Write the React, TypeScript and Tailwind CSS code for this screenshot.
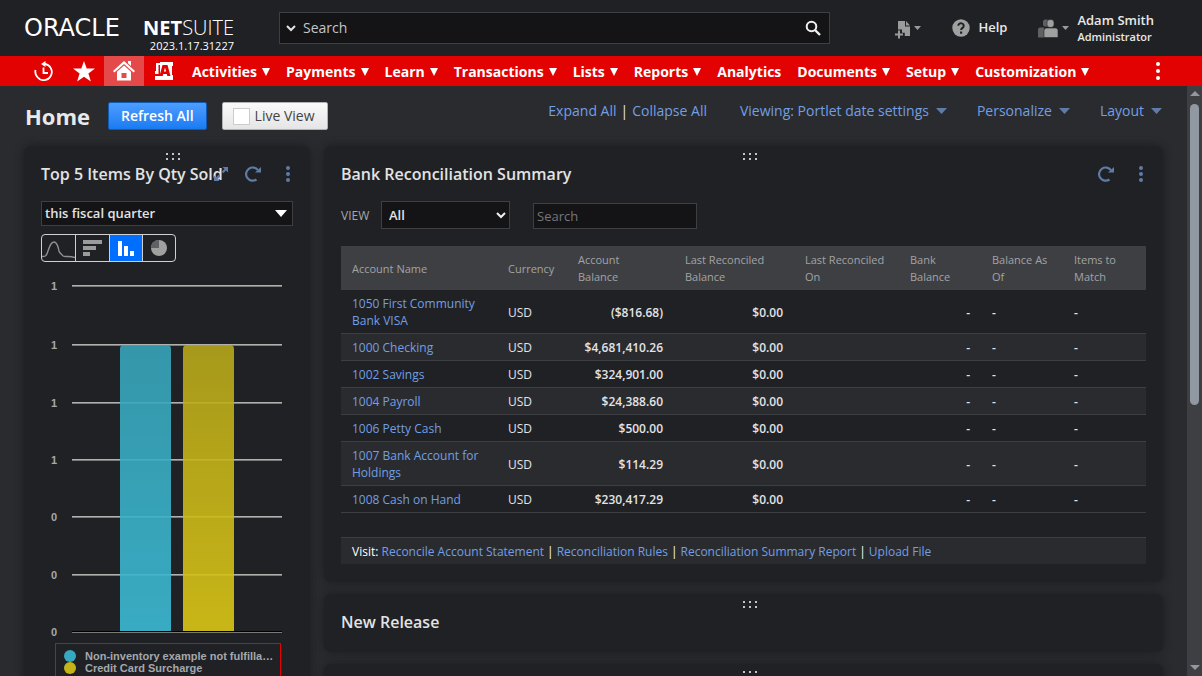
import { ReactNode, useState } from "react";

type Account = {
  name: string;
  balance: string;
};

const NAV_ITEMS = [
  { label: "Activities", menu: true },
  { label: "Payments", menu: true },
  { label: "Learn", menu: true },
  { label: "Transactions", menu: true },
  { label: "Lists", menu: true },
  { label: "Reports", menu: true },
  { label: "Analytics", menu: false },
  { label: "Documents", menu: true },
  { label: "Setup", menu: true },
  { label: "Customization", menu: true },
];

const COLUMNS = [
  { label: "Account Name", width: "w-[156px]" },
  { label: "Currency", width: "w-[70px]" },
  { label: "Account\nBalance", width: "w-[107px]" },
  { label: "Last Reconciled\nBalance", width: "w-[120px]" },
  { label: "Last Reconciled\nOn", width: "w-[105px]" },
  { label: "Bank\nBalance", width: "w-[82px]" },
  { label: "Balance As\nOf", width: "w-[82px]" },
  { label: "Items to\nMatch", width: "w-[83px]" },
];

const ACCOUNTS: Account[] = [
  { name: "1050 First Community Bank VISA", balance: "($816.68)" },
  { name: "1000 Checking", balance: "$4,681,410.26" },
  { name: "1002 Savings", balance: "$324,901.00" },
  { name: "1004 Payroll", balance: "$24,388.60" },
  { name: "1006 Petty Cash", balance: "$500.00" },
  { name: "1007 Bank Account for Holdings", balance: "$114.29" },
  { name: "1008 Cash on Hand", balance: "$230,417.29" },
];

const VISIT_LINKS = [
  "Reconcile Account Statement",
  "Reconciliation Rules",
  "Reconciliation Summary Report",
  "Upload File",
];

const GRID_LINES = [
  { y: 15, label: "1" },
  { y: 74, label: "1" },
  { y: 132, label: "1" },
  { y: 189, label: "1" },
  { y: 246, label: "0" },
  { y: 304, label: "0" },
  { y: 361, label: "0" },
];

function Caret({ className }: { className: string }) {
  return (
    <svg viewBox="0 0 10 5" preserveAspectRatio="none" className={className} fill="currentColor" aria-hidden="true">
      <path d="M0 0h10L5 5z" />
    </svg>
  );
}

function Logo() {
  return (
    <div className="flex w-[210px] flex-col pt-4">
      <div className="flex items-center justify-between leading-6 text-white">
        <span className="font-['DejaVu_Sans'] text-[24px]">ORACLE</span>
        <span className="text-[20px]">
          <span className="font-bold">NET</span>
          <span className="font-light">SUITE</span>
        </span>
      </div>
      <span className="text-right text-[11px] leading-3 text-white">2023.1.17.31227</span>
    </div>
  );
}

function TopBar() {
  return (
    <header className="flex h-14 shrink-0 bg-[#202124] pr-12 pl-6">
      <Logo />
      <form className="my-3 ml-[45px] flex min-w-0 flex-1 items-center border border-[#3e3f43] bg-[#141416]">
        <button type="button" aria-label="Search filter" className="pl-1.5">
          <svg viewBox="0 0 10 10" className="h-2.5 w-2.5" fill="none" stroke="#e2e3e5" strokeWidth="2">
            <path d="M1 3l4 4 4-4" />
          </svg>
        </button>
        <input
          aria-label="Global search"
          placeholder="Search"
          className="min-w-0 flex-1 px-[7px] text-sm text-white outline-none placeholder:text-[#c4c5c7]"
        />
        <button type="button" aria-label="Search" className="px-2">
          <svg viewBox="0 0 16 16" className="h-4 w-4" fill="none" stroke="#f0f0f0" strokeWidth="2">
            <circle cx="6.5" cy="6.5" r="4.8" />
            <path d="M10 10l5 5" strokeWidth="2.4" />
          </svg>
        </button>
      </form>

      <button type="button" aria-label="Create new" className="ml-[65px] flex items-center gap-[3px] text-[#9b9b9b]">
        <svg viewBox="0 0 16 18" className="mt-1 h-[18px] w-4" fill="currentColor">
          <path d="M3 0h7v5.500h5V15h-5.200v-3.200H7V8.500H3z" />
          <path d="M11 0l4 4.500h-4z" />
          <path d="M3 9.500h2v3h3v2H5v3H3v-3H0v-2h3z" />
        </svg>
        <Caret className="h-1 w-[7px]" />
      </button>

      <a href="#help" className="ml-[31px] flex items-center gap-2 text-[13px] font-semibold text-[#e8e8e8]">
        <svg viewBox="0 0 18 18" className="h-[18px] w-[18px]">
          <circle cx="9" cy="9" r="8.7" fill="#a0a0a0" />
          <path d="M6.300 6.800a2.700 2.500 0 115 1.300c-.8 1-2.200 1.200-2.200 3" fill="none" stroke="#202124" strokeWidth="2" />
          <rect x="8" y="12.5" width="2.2" height="2.2" fill="#202124" />
        </svg>
        Help
      </a>

      <button type="button" className="ml-[31px] flex items-center text-left text-[#9b9b9b]">
        <svg viewBox="0 0 21 19" className="mr-[3px] h-[19px] w-[21px]">
          <g fill="#606164">
            <rect x="5" y="0.5" width="6" height="7" rx="2.6" />
            <path d="M0 18.500v-8q0-2 2-2h4v10z" />
          </g>
          <g fill="#a0a0a0" stroke="#202124" strokeWidth="0.6">
            <rect x="9" y="0.5" width="7" height="8" rx="3" />
            <path d="M6 18.500v-7q0-2.500 2.500-2.500h9q2.500 0 2.500 2.500v7z" />
          </g>
        </svg>
        <Caret className="mr-2 h-1 w-[7px]" />
        <span className="flex flex-col font-semibold text-[#e8e8e8]">
          <span className="text-[13px] leading-[17px]">Adam Smith</span>
          <span className="text-[11px] leading-4">Administrator</span>
        </span>
      </button>
    </header>
  );
}

function NavBar() {
  return (
    <nav className="flex h-[30px] shrink-0 items-stretch bg-[#e30202] pr-[42px] pl-6 text-white">
      <button type="button" aria-label="Recent records" className="flex w-10 items-center justify-center">
        <svg viewBox="0 0 20 20" className="h-5 w-5" fill="none" stroke="currentColor" strokeWidth="1.8">
          <path d="M1.500 9a8 8 0 001.8 7 8 8 0 0013.400-1A8 8 0 0010 3" />
          <path d="M9.500 6.500V12h4.500" />
          <path d="M11.500 0v6L7 3z" fill="currentColor" stroke="none" />
        </svg>
      </button>
      <button type="button" aria-label="Shortcuts" className="flex w-10 items-center justify-center">
        <svg viewBox="0 0 22 21" className="h-[21px] w-[22px]" fill="currentColor">
          <path d="M11 0l2.700 7.600H22l-6.600 5 2.500 7.900L11 15.700l-6.900 4.800 2.500-7.900L0 7.600h8.300z" />
        </svg>
      </button>
      <button type="button" aria-label="Home" className="flex w-10 items-center justify-center bg-[#e54a4a]">
        <svg viewBox="0 0 22 20" className="h-5 w-[22px]" fill="currentColor">
          <path d="M11 0l11 10-1.400 1.600L11 2.900 1.400 11.600 0 10z" />
          <path d="M15 0h3v5l-3-2.700z" />
          <path fillRule="evenodd" d="M11 4.500l7 6.300v8.700H4v-8.700zM8.500 12v5h5v-5z" />
        </svg>
      </button>
      <button type="button" aria-label="Accounting" className="flex w-10 items-center justify-center">
        <svg viewBox="0 0 18 18" className="h-[18px] w-[18px]">
          <path d="M1 1h4v2H3.500v9H0V9h1zM5 0h13v4h-1v9h1v5H0v-4h5z" fill="#fff" />
          <path
            d="M4.500 14L7.500 3h5L15.500 14h-3.200l-.5-2H8.200l-.5 2zM8.900 9.500h2.200L10 5.500z"
            fill="#e30202"
            fillRule="evenodd"
          />
        </svg>
      </button>
      {NAV_ITEMS.map((item) => (
        <a
          key={item.label}
          href={`#${item.label.toLowerCase()}`}
          className="flex items-center gap-[5px] px-2 pt-0.5 text-sm font-bold whitespace-nowrap"
        >
          {item.label}
          {item.menu && (
            <svg viewBox="0 0 8 8" className="h-2 w-2" fill="currentColor" aria-hidden="true">
              <path d="M0 0h8L4 8z" />
            </svg>
          )}
        </a>
      ))}
      <button type="button" aria-label="More" className="ml-auto flex flex-col items-center justify-center gap-[3px]">
        <span className="h-1 w-1 rounded-full bg-white" />
        <span className="h-1 w-1 rounded-full bg-white" />
        <span className="h-1 w-1 rounded-full bg-white" />
      </button>
    </nav>
  );
}

function PageHeading() {
  return (
    <div className="flex h-[60px] items-start justify-between pt-4 pl-px">
      <div className="flex items-center">
        <h1 className="w-[83px] text-[22px] leading-7 font-bold text-[#e8e9eb]">Home</h1>
        <button
          type="button"
          className="h-7 rounded-xs border border-[#125ab2] bg-linear-to-b from-[#4c9dff] to-[#187bf2] px-3 text-sm font-semibold text-white"
        >
          Refresh All
        </button>
        <label className="ml-[15px] flex h-7 items-center gap-[5px] rounded-xs border border-[#b2b2b2] bg-linear-to-b from-[#fafafa] to-[#e5e5e5] pr-3 pl-2.5 text-sm text-[#444]">
          <input type="checkbox" className="h-[17px] w-[17px] appearance-none border border-[#ccc] bg-white" />
          Live View
        </label>
      </div>
      <div className="flex text-sm leading-[17px] text-[#729fe3]">
        <a href="#expand">Expand All</a>
        <span className="px-1 text-[#e8e9eb]">|</span>
        <a href="#collapse">Collapse All</a>
        <a href="#viewing" className="ml-[33px] flex items-center gap-[7px]">
          Viewing: Portlet date settings
          <Caret className="h-1.5 w-[11px] text-[#5f7ba8]" />
        </a>
        <a href="#personalize" className="ml-[30px] flex items-center gap-[7px]">
          Personalize
          <Caret className="h-1.5 w-[11px] text-[#5f7ba8]" />
        </a>
        <a href="#layout" className="ml-[30px] flex items-center gap-[7px] pr-px">
          Layout
          <Caret className="h-1.5 w-[11px] text-[#5f7ba8]" />
        </a>
      </div>
    </div>
  );
}

function ExpandIcon() {
  return (
    <svg viewBox="0 0 14 14" className="h-3.5 w-3.5" fill="#5f7ba8">
      <path d="M8.500 0H14v5.500l-2-2-2.800 2.800-1.500-1.500L10.500 2zM5.500 14H0V8.500l2 2 2.800-2.800 1.500 1.500L3.500 12z" />
    </svg>
  );
}

function RefreshIcon() {
  return (
    <svg viewBox="0 0 16 16" className="h-4 w-4" fill="none" stroke="#5f7ba8" strokeWidth="2.2">
      <path d="M13 4.200A6.600 6.600 0 1011.500 13.500" />
      <path d="M16 1v5.500h-6z" fill="#5f7ba8" stroke="none" />
    </svg>
  );
}

function Portlet({ title, actions, children }: { title?: string; actions?: ReactNode; children?: ReactNode }) {
  return (
    <section className="relative rounded-lg bg-[#202124] px-[17px] pt-4 pb-[18px] shadow-[0_0_8px_#1b1c1e]">
      <svg viewBox="0 0 14 7" className="absolute top-[7px] left-1/2 h-[7px] w-3.5 -translate-x-px" fill="#c4c5c7">
        <path d="M0 0h2v2H0zM6 0h2v2H6zM12 0h2v2h-2zM0 5h2v2H0zM6 5h2v2H6zM12 5h2v2h-2z" />
      </svg>
      <div className="flex h-6 items-center">
        {title && (
          <h2 className="min-w-0 flex-1 text-base leading-6 font-semibold whitespace-nowrap text-[#e2e3e5]">{title}</h2>
        )}
        {actions}
      </div>
      {children}
    </section>
  );
}

function PortletActions({ expand = false }: { expand?: boolean }) {
  return (
    <div className="flex items-center">
      {expand && (
        <button type="button" aria-label="Expand" className="mr-[17px]">
          <ExpandIcon />
        </button>
      )}
      <button type="button" aria-label="Refresh" className="mr-[25px]">
        <RefreshIcon />
      </button>
      <button type="button" aria-label="Portlet menu" className="mr-[3px] flex flex-col gap-0.5">
        <span className="h-1 w-1 rounded-full bg-[#5f7ba8]" />
        <span className="h-1 w-1 rounded-full bg-[#5f7ba8]" />
        <span className="h-1 w-1 rounded-full bg-[#5f7ba8]" />
      </button>
    </div>
  );
}

function ChartTypes() {
  return (
    <div className="mt-2 flex h-7 w-[135px] overflow-hidden rounded-sm border border-[#d0d0d0]">
      <button type="button" aria-label="Line chart" className="w-[34px] border-r border-[#d0d0d0]">
        <svg viewBox="0 0 33 26" className="h-[26px] w-[33px]" fill="none" stroke="#8f8f8f" strokeWidth="1.4">
          <path d="M0 21.500c3 0 4 0 5.500-4C7.500 12 8.500 7 12 7s4 5 5 9c1 3 2 2 3.500 4.500S25 20 33 22.500" />
        </svg>
      </button>
      <button type="button" aria-label="Bar chart" className="flex w-[34px] items-center justify-center border-r border-[#d0d0d0]">
        <svg viewBox="0 0 19 16" className="h-4 w-[19px]" fill="#9b9b9b">
          <path d="M0 0h19v4H0zM0 6h13v4H0zM0 12h7v4H0z" />
        </svg>
      </button>
      <button
        type="button"
        aria-label="Column chart"
        aria-pressed="true"
        className="flex w-[33px] items-center justify-center border-r border-[#d0d0d0] bg-[#006eff]"
      >
        <svg viewBox="0 0 16 15" className="h-[15px] w-4" fill="#fff">
          <path d="M0 0h4v15H0zM6 5h4v10H6zM12 10h4v5h-4z" />
        </svg>
      </button>
      <button type="button" aria-label="Pie chart" className="flex flex-1 items-center justify-center">
        <svg viewBox="0 0 16 16" className="h-4 w-4">
          <circle cx="8" cy="8" r="8" fill="#a0a0a0" />
          <path d="M8 8V0a8 8 0 00-8 8z" fill="#606164" />
        </svg>
      </button>
    </div>
  );
}

function SalesChart() {
  return (
    <div className="mt-2">
      <svg viewBox="0 0 252 370" className="h-[370px] w-[252px]" role="img" aria-label="Top 5 items by quantity sold">
        <defs>
          <linearGradient id="teal" x1="0" y1="0" x2="0" y2="1">
            <stop offset="0" stopColor="#37a3b8" />
            <stop offset="1" stopColor="#3bbad3" />
          </linearGradient>
          <linearGradient id="gold" x1="0" y1="0" x2="0" y2="1">
            <stop offset="0" stopColor="#b5a61a" />
            <stop offset="1" stopColor="#dbc616" />
          </linearGradient>
        </defs>
        {GRID_LINES.map((line, i) => (
          <g key={line.y}>
            <rect x="31" y={line.y} width="210" height="1" fill={i === 6 ? "#000" : "#b0b0ac"} />
            <rect x="31" y={line.y + 1} width="210" height="1" fill="#7a7a78" />
            <text x="10" y={line.y + 5} className="fill-[#a4a8ad] font-['Liberation_Sans'] text-[11px] font-bold">
              {line.label}
            </text>
          </g>
        ))}
        <path d="M79 361V79q0-4 4-4h43q4 0 4 4v282z" fill="url(#teal)" fillOpacity="0.9" />
        <path d="M142 361V79q0-4 4-4h43q4 0 4 4v282z" fill="url(#gold)" fillOpacity="0.9" />
      </svg>
      <ul className="mt-[3px] mr-3 ml-3.5 flex h-20 flex-col border border-[#e30202] px-2 pt-1.5 font-['Liberation_Sans'] text-[11px] leading-3 font-bold text-[#a4a8ad]">
        <li className="flex items-center gap-[9px]">
          <span className="h-3 w-3 shrink-0 rounded-full bg-[#37a9be]" />
          <span className="whitespace-nowrap">Non-inventory example not fulfilla…</span>
        </li>
        <li className="flex items-center gap-[9px]">
          <span className="h-3 w-3 shrink-0 rounded-full bg-[#c4b41a]" />
          <span className="whitespace-nowrap">Credit Card Surcharge</span>
        </li>
      </ul>
    </div>
  );
}

function TopItemsPortlet() {
  const [period, setPeriod] = useState("this fiscal quarter");

  return (
    <Portlet title="Top 5 Items By Qty Sold" actions={<PortletActions expand />}>
      <div className="relative mt-[15px]">
        <select
          aria-label="Period"
          value={period}
          onChange={(e) => setPeriod(e.target.value)}
          className="block h-[25px] w-full appearance-none border border-[#3e3f43] bg-[#141416] px-[3px] pt-px text-[13px] font-semibold text-[#e2e3e5]"
        >
          <option>this fiscal quarter</option>
          <option>this fiscal year</option>
        </select>
        <Caret className="pointer-events-none absolute top-[9px] right-1.5 h-[7px] w-3 text-white" />
      </div>
      <ChartTypes />
      <SalesChart />
    </Portlet>
  );
}

function ReconciliationPortlet() {
  const [view, setView] = useState("All");

  return (
    <Portlet title="Bank Reconciliation Summary" actions={<PortletActions />}>
      <form className="mt-[15px] flex items-end">
        <label htmlFor="view" className="w-10 text-[12px] leading-[26px] text-[#a4a8ad]">
          VIEW
        </label>
        <div className="relative w-[129px]">
          <select
            id="view"
            value={view}
            onChange={(e) => setView(e.target.value)}
            className="block h-7 w-full appearance-none border border-[#3e3f43] bg-[#141416] px-[7px] pt-px text-[13px] font-semibold text-[#e2e3e5]"
          >
            <option>All</option>
            <option>To Match</option>
          </select>
          <svg
            viewBox="0 0 10 10"
            className="pointer-events-none absolute top-2.5 right-1 h-2.5 w-2.5"
            fill="none"
            stroke="#f0f0f0"
            strokeWidth="2"
          >
            <path d="M1 2l4 4 4-4" />
          </svg>
        </div>
        <input
          aria-label="Search accounts"
          placeholder="Search"
          className="ml-[23px] h-[26px] w-[164px] border border-[#3e3f43] bg-[#141416] px-[3px] text-[13px] text-white placeholder:text-[#75767a]"
        />
      </form>

      <table className="mt-[17px] w-full table-fixed text-[12px] leading-[17px]">
        <thead>
          <tr className="bg-[#3e3f43] text-left text-[11px] text-[#a3a3a3]">
            {COLUMNS.map((col) => (
              <th key={col.label} className={`${col.width} px-[11px] py-[5px] font-normal whitespace-pre-line`}>
                {col.label}
              </th>
            ))}
          </tr>
        </thead>
        <tbody>
          {ACCOUNTS.map((account) => (
            <tr key={account.name} className="border-b border-[#3e3f43] font-semibold text-[#e2e3e5] even:bg-[#2a2b2f]">
              <td className="px-[11px] pt-[5px] pb-1 font-normal text-[#729fe3]">
                <a href="#account">{account.name}</a>
              </td>
              <td className="px-[11px] pt-[5px] pb-1 font-medium">USD</td>
              <td className="px-[11px] pt-[5px] pb-1 text-right">{account.balance}</td>
              <td className="px-[11px] pt-[5px] pb-1 text-right">$0.00</td>
              <td />
              <td className="px-[11px] pt-[5px] pb-1 text-right">-</td>
              <td className="px-[11px] pt-[5px] pb-1">-</td>
              <td className="px-[11px] pt-[5px] pb-1">-</td>
            </tr>
          ))}
        </tbody>
      </table>

      <div className="mt-6 border-t border-[#3e3f43] bg-[#2a2b2f] px-[11px] pt-[5px] pb-1 text-[12px] leading-[17px] text-[#729fe3]">
        <span className="text-white">Visit: </span>
        {VISIT_LINKS.map((link, i) => (
          <span key={link}>
            {i > 0 && <span className="px-[3px] text-white">|</span>}
            <a href="#visit">{link}</a>
          </span>
        ))}
      </div>
    </Portlet>
  );
}

function ScrollBar() {
  return (
    <div className="flex w-[15px] shrink-0 flex-col items-center justify-between bg-[#3e3f43] pt-[5px] pb-1.5 text-[#9298a2]">
      <div className="flex flex-col items-center gap-2">
        <Caret className="h-[5px] w-2.5 rotate-180" />
        <div className="h-[301px] w-[9px] rounded-full bg-[#9298a2]" />
      </div>
      <Caret className="h-[5px] w-2.5" />
    </div>
  );
}

export default function App() {
  return (
    <div className="flex h-screen flex-col overflow-hidden bg-[#2a2b2f] font-['Open_Sans',sans-serif]">
      <TopBar />
      <NavBar />
      <div className="flex min-h-0 flex-1">
        <main className="min-w-0 flex-1 overflow-hidden pr-6 pl-6">
          <PageHeading />
          <div className="grid grid-cols-[286px_minmax(0,1fr)] items-start gap-x-3.5">
            <TopItemsPortlet />
            <div className="flex flex-col gap-3">
              <ReconciliationPortlet />
              <Portlet title="New Release" />
              <Portlet />
            </div>
          </div>
        </main>
        <ScrollBar />
      </div>
    </div>
  );
}
